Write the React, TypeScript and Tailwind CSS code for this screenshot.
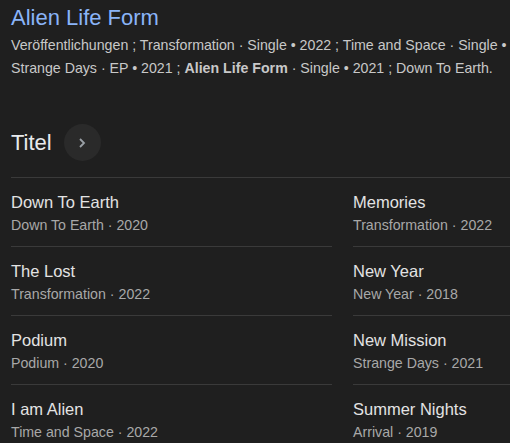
const rows: [string, string, string, string][] = [
  ['Down To Earth', 'Down To Earth · 2020', 'Memories', 'Transformation · 2022'],
  ['The Lost', 'Transformation · 2022', 'New Year', 'New Year · 2018'],
  ['Podium', 'Podium · 2020', 'New Mission', 'Strange Days · 2021'],
  ['I am Alien', 'Time and Space · 2022', 'Summer Nights', 'Arrival · 2019'],
];

function Track({ title, sub }: { title: string; sub: string }) {
  return (
    <div className="border-t border-[#3a3a3a] pt-3 pb-[10px]">
      <div className="text-[16.5px] leading-6 text-[#e3e3e3]">{title}</div>
      <div className="text-[14.2px] leading-[22px] text-[#a8a8a8]">{sub}</div>
    </div>
  );
}

export default function App() {
  return (
    <main
      className="h-[443px] w-[510px] overflow-hidden bg-[#1f1f1f]"
      style={{ fontFamily: '"Liberation Sans", Arial, sans-serif' }}
    >
      <div className="w-[690px] px-[11px] pt-1">
        <h1 className="text-[22px] leading-7 text-[#8ab4f8]">Alien Life Form</h1>
        <p className="mt-[2px] text-[14.2px] leading-[23px] text-[#c8c8c8]">
          <span className="block whitespace-nowrap">
            Veröffentlichungen ; Transformation · Single • 2022 ; Time and Space · Single • 2022 ;
          </span>
          <span className="block whitespace-nowrap">
            Strange Days · EP • 2021 ; <b>Alien Life Form</b> · Single • 2021 ; Down To Earth.
          </span>
        </p>

        <div className="mt-[44px] flex items-center gap-3">
          <h2 className="text-[22px] leading-7 text-[#e8eaed]">Titel</h2>
          <button className="flex h-[37px] w-[37px] items-center justify-center rounded-full bg-[#2a2a2a]">
            <svg width="10" height="12" viewBox="0 0 10 12" fill="none">
              <path d="M3 2l4 4-4 4" stroke="#9aa0a6" strokeWidth="1.8" />
            </svg>
          </button>
        </div>

        <div className="mt-4 w-[663px] border-t border-[#3a3a3a]">
          {rows.map(([a, b, c, d], i) => (
            <div key={a} className={`grid grid-cols-2 gap-[21px] ${i === 0 ? '-mt-px' : ''}`}>
              <Track title={a} sub={b} />
              <Track title={c} sub={d} />
            </div>
          ))}
        </div>
      </div>
    </main>
  );
}
